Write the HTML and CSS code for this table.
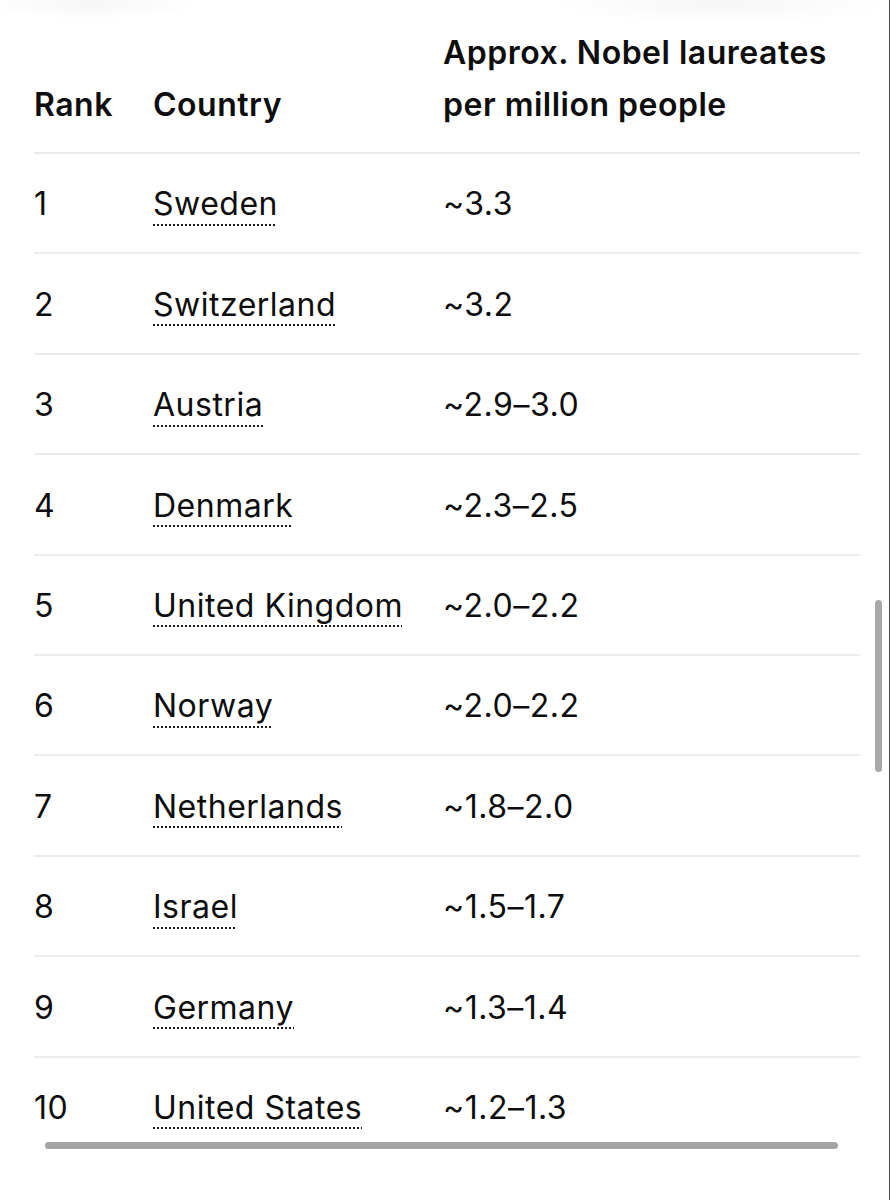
FILE: index.html
```html
<!DOCTYPE html>
<html lang="en">
<head>
<meta charset="utf-8">
<title>Nobel laureates per million people</title>
<link rel="stylesheet" href="styles.css">
</head>
<body>
<div class="page">
  <div class="table-wrap">
    <table class="nobel">
      <thead>
        <tr>
          <th class="c-rank">Rank</th>
          <th class="c-country">Country</th>
          <th class="c-value">Approx. Nobel laureates per million people</th>
        </tr>
      </thead>
      <tbody>
        <tr><td>1</td><td><span class="link">Sweden</span></td><td>~3.3</td></tr>
        <tr><td>2</td><td><span class="link">Switzerland</span></td><td>~3.2</td></tr>
        <tr><td>3</td><td><span class="link">Austria</span></td><td>~2.9–3.0</td></tr>
        <tr><td>4</td><td><span class="link">Denmark</span></td><td>~2.3–2.5</td></tr>
        <tr><td>5</td><td><span class="link">United Kingdom</span></td><td>~2.0–2.2</td></tr>
        <tr><td>6</td><td><span class="link">Norway</span></td><td>~2.0–2.2</td></tr>
        <tr><td>7</td><td><span class="link">Netherlands</span></td><td>~1.8–2.0</td></tr>
        <tr><td>8</td><td><span class="link">Israel</span></td><td>~1.5–1.7</td></tr>
        <tr><td>9</td><td><span class="link">Germany</span></td><td>~1.3–1.4</td></tr>
        <tr><td>10</td><td><span class="link">United States</span></td><td>~1.2–1.3</td></tr>
      </tbody>
    </table>
    <div class="hscroll"></div>
  </div>
  <div class="vscroll"></div>
</div>
</body>
</html>
```
FILE: styles.css
```css
html, body {
  margin: 0;
  padding: 0;
  background: #ffffff;
}

body {
  font-family: Inter, "Liberation Sans", sans-serif;
  color: #0d0d0d;
}

.page {
  position: relative;
  height: 1200px;
  box-sizing: border-box;
  border-right: 1px solid #4a4a4a;
  background:
    radial-gradient(ellipse 110px 16px at 90px 4px, rgba(0,0,0,0.035), rgba(0,0,0,0) 100%),
    radial-gradient(ellipse 170px 20px at 720px 4px, rgba(0,0,0,0.035), rgba(0,0,0,0) 100%),
    #ffffff;
  background-repeat: no-repeat;
}

.table-wrap {
  position: relative;
  padding-left: 34px;
  width: 826px;
}

.nobel {
  border-collapse: collapse;
  width: 826px;
  table-layout: fixed;
  font-size: 32px;
  letter-spacing: 0.5px;
}

.c-rank { width: 119px; }
.c-country { width: 290px; }

.nobel th {
  text-align: left;
  font-weight: 600;
  line-height: 52px;
  vertical-align: bottom;
  padding: 27px 0 21px 0;
  border-bottom: 2px solid #e9e9e9;
}

.nobel td {
  line-height: 40px;
  padding: 30.4px 0 28px 0;
  border-bottom: 2px solid #ececec;
  vertical-align: middle;
  white-space: nowrap;
}

.nobel tbody tr:last-child td {
  border-bottom: none;
}

.link {
  text-decoration: underline dotted #1a1a1a;
  text-decoration-thickness: 2px;
  text-underline-offset: 9px;
}

.hscroll {
  position: absolute;
  left: 45px;
  top: 1142px;
  width: 793px;
  height: 7px;
  border-radius: 4px;
  background: #a4a4a4;
}

.vscroll {
  position: absolute;
  left: 875px;
  top: 600px;
  width: 7px;
  height: 172px;
  border-radius: 4px;
  background: #a8a8a8;
}
```
